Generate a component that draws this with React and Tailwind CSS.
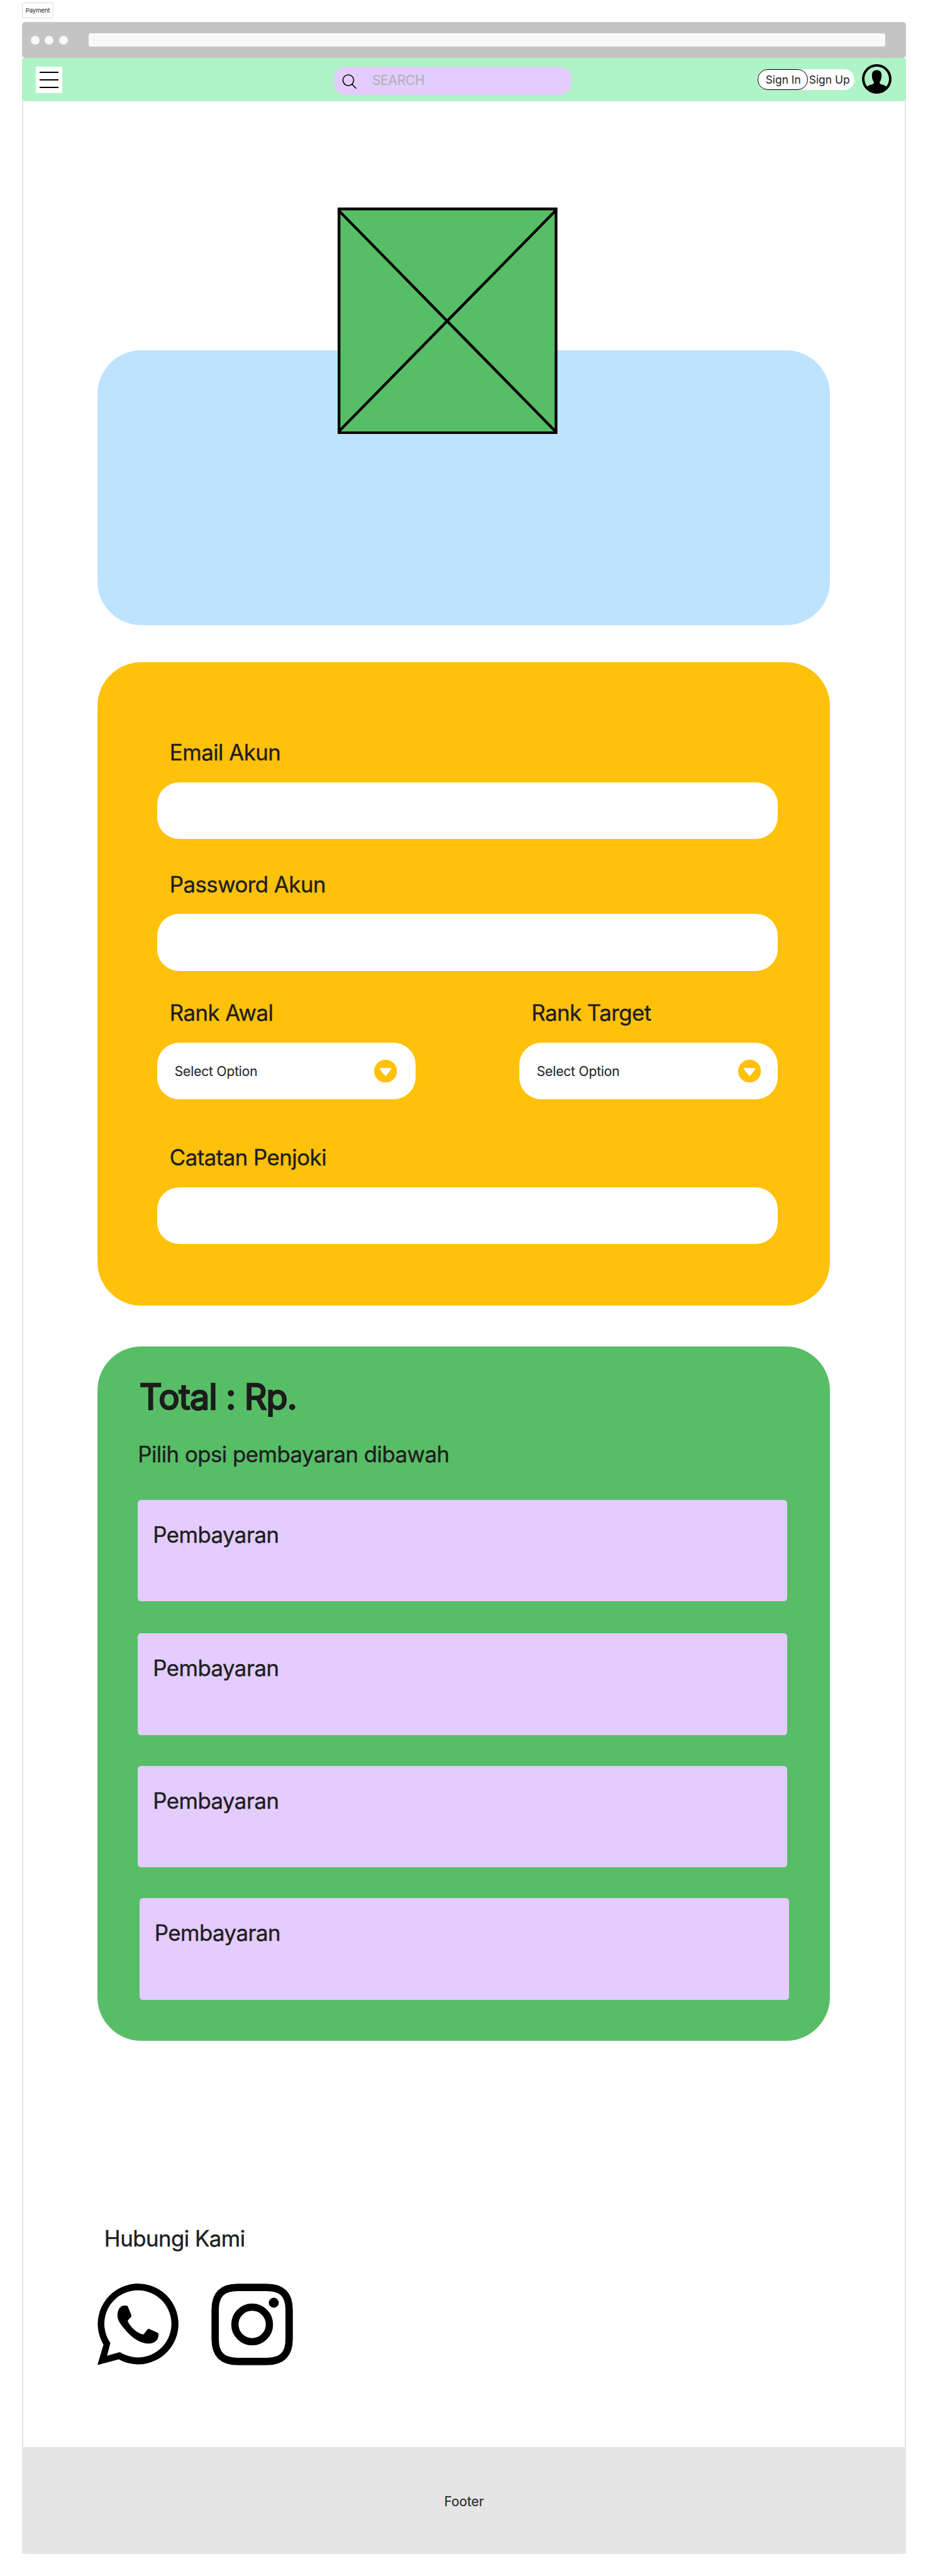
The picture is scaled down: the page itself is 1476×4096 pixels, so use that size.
const LABEL =
  "text-[34.8px] leading-[42px] font-normal tracking-[-0.53px] text-[#1e1e1e] whitespace-nowrap [-webkit-text-stroke:0.4px_#1e1e1e]";

const FIELD = "w-full rounded-[34.8px] bg-white";

function BrowserBar() {
  return (
    <div className="flex h-[57.5px] items-center rounded-[5px] bg-[#c4c4c4] pl-[13.6px] pr-[33px]">
      <div className="flex w-[92.3px] gap-[8.9px]">
        <span className="size-[14px] rounded-full bg-[#f8f8f8]" />
        <span className="size-[14px] rounded-full bg-[#f8f8f8]" />
        <span className="size-[14px] rounded-full bg-[#f8f8f8]" />
      </div>
      <div className="h-[20.9px] flex-1 rounded-[3px] bg-[#f8f8f8]" />
    </div>
  );
}

function Avatar() {
  return (
    <svg viewBox="0 0 54 54" className="size-[47px]">
      <circle cx="27" cy="27" r="27" />
      <path
        fill="#aff4c6"
        d="M27 4.5C14.6 4.5 4.6 14.6 4.6 27c0 5.3 1.9 10.2 5 14C12.5 38 17 37.6 19.8 36.5C21.5 35.8 21.7 34.5 21.7 32.6C19.5 30 18.2 25.5 18.2 20C18.2 14.5 21.5 11 27 11S35.8 14.5 35.8 20C35.8 25.5 34.5 30 32.3 32.6C32.3 34.5 32.5 35.8 34.2 36.5C37 37.6 41.5 38 44.4 41c3.1-3.8 5-8.7 5-14C49.4 14.6 39.4 4.5 27 4.5Z"
      />
    </svg>
  );
}

function NavBar() {
  return (
    <nav className="flex h-[68.7px] items-start rounded-[5px] bg-[#aff4c6] pl-[22.3px]">
      <button className="mt-[13.9px] flex h-[41.8px] w-[41.9px] flex-col items-center justify-center gap-[10.4px] bg-white">
        <span className="h-[1.8px] w-[29.7px] bg-black" />
        <span className="h-[1.8px] w-[29.7px] bg-black" />
        <span className="h-[1.8px] w-[29.7px] bg-black" />
      </button>
      <div className="ml-[431.7px] mt-[13.6px] flex h-[45.3px] w-[377.9px] items-center rounded-[18.8px] bg-[#e4ccff]">
        <svg viewBox="0 0 24 26" className="ml-[13px] mt-[3px] h-[26px] w-[24px] shrink-0" fill="none" stroke="black" strokeWidth="1.6">
          <circle cx="10" cy="10.6" r="8.6" />
          <path d="M16 17l6.6 6.8" />
        </svg>
        <span className="ml-[24px] -mt-px text-[20.9px] leading-[26px] tracking-[-0.2px] text-[#b3b3b3] [-webkit-text-stroke:0.3px_#b3b3b3]">
          SEARCH
        </span>
      </div>
      <div className="ml-[296.6px] mt-[17.4px] flex h-[33px] w-[153.2px] rounded-[16px] bg-white text-[17.4px] text-[#1e1e1e]">
        <span className="w-[80.1px] rounded-[16px] border border-black pl-[11.3px] leading-[31px]">Sign In</span>
        <span className="pl-[1.3px] leading-[33px]">Sign Up</span>
      </div>
      <div className="ml-[12.9px] mt-[9.5px]">
        <Avatar />
      </div>
    </nav>
  );
}

function Hero() {
  return (
    <section className="relative mt-[395.6px] h-[437.4px] rounded-[69.6px] bg-[#bde3ff]">
      <svg
        viewBox="0 0 349.6 360.5"
        className="absolute left-[382.2px] top-[-226.8px] h-[360.5px] w-[349.6px]"
        stroke="black"
      >
        <rect x="2.2" y="2.2" width="345.2" height="356.1" fill="#58bd67" strokeWidth="4.4" />
        <path d="M1 4L347.5 357M1 357L347.5 4" strokeWidth="4.4" fill="none" />
      </svg>
    </section>
  );
}

function Select({ className }) {
  return (
    <div className={`flex h-[90.3px] w-[411.6px] items-center justify-between rounded-[34.8px] bg-white pl-[28px] ${className}`}>
      <span className="mt-px text-[20.9px] leading-[26px] tracking-[-0.1px] text-[#2c2c2c] [-webkit-text-stroke:0.2px_#2c2c2c]">
        Select Option
      </span>
      <svg viewBox="0 0 36.4 36.4" className="size-[36.4px]">
        <circle cx="18.2" cy="18.2" r="18.2" fill="#ffc10a" />
        <path d="M10.2 14.4h16L18.2 24.6Z" fill="white" stroke="white" strokeWidth="2.4" strokeLinejoin="round" />
      </svg>
    </div>
  );
}

function AccountForm() {
  return (
    <section className="mt-[59px] h-[1022.7px] rounded-[69.6px] bg-[#ffc10a] pl-[94.8px] pr-[82.8px] pt-[122.2px]">
      <div className={`${LABEL} pl-[20px]`}>Email Akun</div>
      <div className={`${FIELD} mt-[26.6px] h-[90.1px]`} />
      <div className={`${LABEL} mt-[51.1px] pl-[20px]`}>Password Akun</div>
      <div className={`${FIELD} mt-[26.3px] h-[90.6px]`} />
      <div className="mt-[45.2px] flex justify-between">
        <div>
          <div className={`${LABEL} pl-[20px]`}>Rank Awal</div>
          <div className="mt-[26.9px]">
            <Select className="pr-[30px]" />
          </div>
        </div>
        <div>
          <div className={`${LABEL} pl-[19.4px]`}>Rank Target</div>
          <div className="mt-[26.9px]">
            <Select className="pr-[27px]" />
          </div>
        </div>
      </div>
      <div className={`${LABEL} mt-[70.7px] pl-[20px]`}>Catatan Penjoki</div>
      <div className={`${FIELD} mt-[26.8px] h-[90.2px]`} />
    </section>
  );
}

function PaymentOption({ className }) {
  return (
    <div className={`h-[161.9px] w-[1033.2px] rounded-[5.2px] bg-[#e4ccff] pl-[24px] pt-[34.2px] ${className}`}>
      <div className={LABEL}>Pembayaran</div>
    </div>
  );
}

function Payment() {
  return (
    <section className="mt-[65.2px] h-[1104px] rounded-[69.6px] bg-[#58bd67] pl-[64.2px] pt-[46.2px]">
      <h1 className="pl-[2.5px] text-[55.7px] font-normal leading-[68px] tracking-[-0.019em] text-[#1e1e1e] [-webkit-text-stroke:2.4px_#1a1a1a]">
        Total : Rp.
      </h1>
      <p className={`${LABEL} mt-[36.1px]`}>Pilih opsi pembayaran dibawah</p>
      <PaymentOption className="mt-[51.4px]" />
      <PaymentOption className="mt-[50.6px]" />
      <PaymentOption className="mt-[48.7px]" />
      <PaymentOption className="ml-[2.6px] mt-[48.5px]" />
    </section>
  );
}

function WhatsAppIcon() {
  return (
    <svg viewBox="55 396 449 449" className="size-[129.8px]">
      <path
        fillRule="evenodd"
        d="M88 732A222 222 0 1 1 172 813L55 844ZM126 723L108 793L178 773A184.5 184.5 0 1 0 126 723Z"
      />
      <path d="M200 517H213Q220 517 223 524L242 571Q243 576 239 581L224 597Q220 601 223 606C240 640 270 665 303 675Q308 677 312 672L331 648Q335 643 341 646L386 667Q391 670 391 675C391 707 370 726 335 726C270 724 222 670 188 626C170 602 165 588 165 570C166 540 178 520 200 517Z" />
    </svg>
  );
}

function InstagramIcon() {
  return (
    <svg viewBox="677 396 449 449" className="size-[129.8px]">
      <path
        d="M824 417.5H980C1068 417.5 1105.5 456 1105.5 542V700C1105.5 786 1068 824.5 980 824.5H824C736 824.5 698.5 786 698.5 700V542C698.5 456 736 417.5 824 417.5Z"
        fill="none"
        stroke="black"
        strokeWidth="40.5"
      />
      <circle cx="902" cy="621" r="95" fill="none" stroke="black" strokeWidth="40" />
      <circle cx="1021" cy="501.5" r="27.5" />
    </svg>
  );
}

function Contact() {
  return (
    <section className="mt-[292.9px] h-[353.4px]">
      <h2 className={`${LABEL} pl-[10.8px]`}>Hubungi Kami</h2>
      <div className="mt-[51.2px] flex gap-[51px]">
        <WhatsAppIcon />
        <InstagramIcon />
      </div>
    </section>
  );
}

export default function App() {
  return (
    <div className="flex h-[4096px] w-[1476px] flex-col bg-white px-[35px] pt-[3.5px] font-['Inter',sans-serif]">
      <div className="mb-[5.5px] h-[25.8px] w-[50px] rounded-[2px] border border-[#dcdcdc] text-center text-[9.6px] leading-[24px] tracking-[-0.15px] text-[#1e1e1e]">
        Payment
      </div>
      <BrowserBar />
      <div className="flex flex-col bg-[linear-gradient(90deg,#e5e5e5_2px,transparent_2px,transparent_calc(100%-2px),#e5e5e5_calc(100%-2px))]">
        <NavBar />
        <main className="ml-[120px] flex w-[1165.2px] flex-col self-start">
          <Hero />
          <AccountForm />
          <Payment />
          <Contact />
        </main>
        <footer className="flex h-[169.7px] items-center justify-center rounded-[5px] bg-[#e5e5e5] pt-[3px] text-[20.9px] text-[#2c2c2c] [-webkit-text-stroke:0.2px_#2c2c2c]">
          Footer
        </footer>
      </div>
    </div>
  );
}
